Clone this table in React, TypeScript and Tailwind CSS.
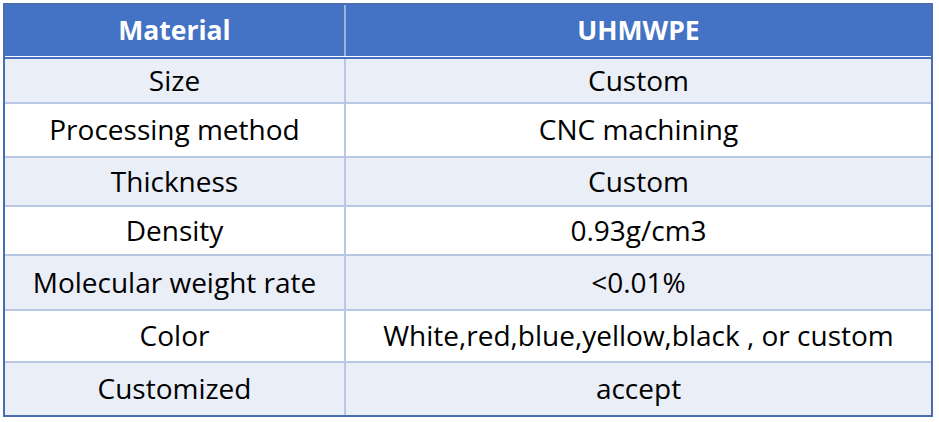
import React from 'react';

const ROWS: { label: string; value: string; h: string; shade: boolean }[] = [
  { label: 'Size', value: 'Custom', h: 'h-[45px]', shade: true },
  { label: 'Processing method', value: 'CNC machining', h: 'h-[54px]', shade: false },
  { label: 'Thickness', value: 'Custom', h: 'h-[49px]', shade: true },
  { label: 'Density', value: '0.93g/cm3', h: 'h-[49px]', shade: false },
  { label: 'Molecular weight rate', value: '<0.01%', h: 'h-[55px]', shade: true },
  { label: 'Color', value: 'White,red,blue,yellow,black , or custom', h: 'h-[52px]', shade: false },
  { label: 'Customized', value: 'accept', h: 'h-[52px]', shade: true },
];

const App: React.FC = () => {
  return (
    <div className="w-[939px] h-[422px] bg-white pt-[3px] pl-[3px] font-['Open_Sans','Liberation_Sans',sans-serif]">
      <div className="w-[930px] border-2 border-[#4a6cb0] text-[28px] leading-none text-black">
        <div className="h-[51px] bg-[#4472c4] grid grid-cols-[339px_2px_1fr] text-white text-[26.5px] font-bold">
          <div className="flex items-center justify-center">Material</div>
          <div className="bg-[#9db3df]" />
          <div className="flex items-center justify-center">UHMWPE</div>
        </div>
        <div className="h-px bg-white" />
        <div className="h-[2px] bg-[#4472c4]" />
        {ROWS.map((row, i) => (
          <div
            key={row.label}
            className={`${row.h} grid grid-cols-[339px_2px_1fr] ${row.shade ? 'bg-[#e9eef7]' : 'bg-white'} ${
              i < ROWS.length - 1 ? 'border-b-2 border-[#b8c7e4]' : ''
            }`}
          >
            <div className="flex items-center justify-center pb-[2px]">{row.label}</div>
            <div className="bg-[#b8c7e4]" />
            <div className="flex items-center justify-center pb-[2px]">{row.value}</div>
          </div>
        ))}
      </div>
    </div>
  );
};

export default App;
